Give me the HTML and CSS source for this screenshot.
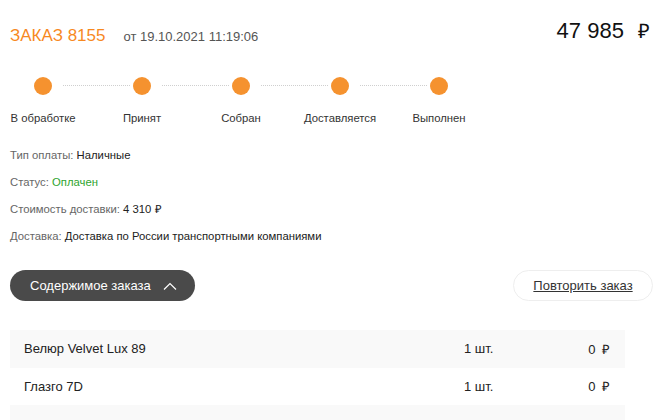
FILE: index.html
```html
<!DOCTYPE html>
<html lang="ru">
<head>
<meta charset="utf-8">
<link rel="stylesheet" href="styles.css">
</head>
<body>
<div class="order">
  <div class="head">
    <div class="title">
      <span class="num">ЗАКАЗ 8155</span>
      <span class="date">от 19.10.2021 11:19:06</span>
    </div>
    <div class="total">47 985 <span class="rub">₽</span></div>
  </div>

  <div class="steps">
    <div class="step"><span class="dot"></span><span class="label">В обработке</span></div>
    <div class="step"><span class="dot"></span><span class="label">Принят</span></div>
    <div class="step"><span class="dot"></span><span class="label">Собран</span></div>
    <div class="step"><span class="dot"></span><span class="label">Доставляется</span></div>
    <div class="step last"><span class="dot"></span><span class="label">Выполнен</span></div>
  </div>

  <div class="info">
    <div class="line">Тип оплаты: <span class="val">Наличные</span></div>
    <div class="line">Статус: <span class="val ok">Оплачен</span></div>
    <div class="line">Стоимость доставки: <span class="val">4 310 <span class="rub">₽</span></span></div>
    <div class="line">Доставка: <span class="val">Доставка по России транспортными компаниями</span></div>
  </div>

  <div class="actions">
    <button class="btn-dark">Содержимое заказа
      <svg width="14" height="8" viewBox="0 0 14 8"><path d="M1 7.5 L7 1.5 L13 7.5" fill="none" stroke="#fff" stroke-width="1.2"/></svg>
    </button>
    <button class="btn-light"><span>Повторить заказ</span></button>
  </div>

  <div class="items">
    <div class="row"><span class="name">Велюр Velvet Lux 89</span><span class="qty">1 шт.</span><span class="price">0 <span class="rub">₽</span></span></div>
    <div class="row"><span class="name">Глазго 7D</span><span class="qty">1 шт.</span><span class="price">0 <span class="rub">₽</span></span></div>
    <div class="row"><span class="name"></span><span class="qty"></span><span class="price"></span></div>
  </div>
</div>
</body>
</html>
```

FILE: styles.css
```css
* { box-sizing: border-box; }
html, body { margin: 0; padding: 0; background: #fff; }
body {
  font-family: "Liberation Sans", Arial, sans-serif;
  color: #222;
  height: 420px;
  overflow: hidden;
}
.order { padding: 16px 10px 0 10px; }

.head {
  display: flex;
  justify-content: space-between;
  align-items: flex-start;
}
.title { display: flex; align-items: baseline; padding-top: 10px; }
.num { color: #f7891f; font-size: 17px; }
.date { color: #555; font-size: 13px; margin-left: 18px; }
.total { font-size: 22px; color: #111; padding-top: 1px; padding-right: 4px; }
.total .rub { margin-left: 8px; font-size: 20px; }

.steps {
  display: grid;
  grid-template-columns: repeat(5, 66px);
  column-gap: 33px;
  margin-top: 31px;
}
.step {
  position: relative;
  display: flex;
  flex-direction: column;
  align-items: center;
}
.step::after {
  content: "";
  position: absolute;
  top: 8px;
  left: calc(50% + 20px);
  width: 67px;
  border-top: 1px dotted #cfcfcf;
}
.step.last::after { display: none; }
.dot {
  width: 18px;
  height: 18px;
  border-radius: 50%;
  background: #f5922f;
}
.label {
  margin-top: 17px;
  font-size: 11.3px;
  color: #333;
  white-space: nowrap;
}

.info { margin-top: 24px; }
.line {
  font-size: 11.3px;
  color: #666;
  height: 27px;
  line-height: 14px;
}
.line .val { color: #222; }
.line .val.ok { color: #2fa52f; }

.actions {
  display: flex;
  justify-content: space-between;
  margin-top: 14px;
  padding-right: 1px;
}
.btn-dark {
  display: flex;
  align-items: center;
  gap: 12px;
  height: 31px;
  width: 185px;
  padding: 0 0 0 20px;
  border: none;
  border-radius: 16px;
  background: #4a4a4a;
  color: #fff;
  font-family: inherit;
  font-size: 13px;
}
.btn-light {
  height: 31px;
  width: 140px;
  border: 1px solid #eee;
  border-radius: 16px;
  background: #fff;
  font-family: inherit;
  font-size: 13px;
  color: #333;
}
.btn-light span { text-decoration: underline; }

.items { margin-top: 29px; width: 615px; }
.row {
  display: flex;
  align-items: center;
  height: 37.5px;
  padding: 0 15px 0 14px;
  font-size: 13px;
  color: #222;
}
.row:nth-child(odd) { background: #f9f9f9; }
.name { flex: 1; }
.qty { width: 100px; }
.price { width: 46px; text-align: right; }
.price .rub { margin-left: 3px; }
```
